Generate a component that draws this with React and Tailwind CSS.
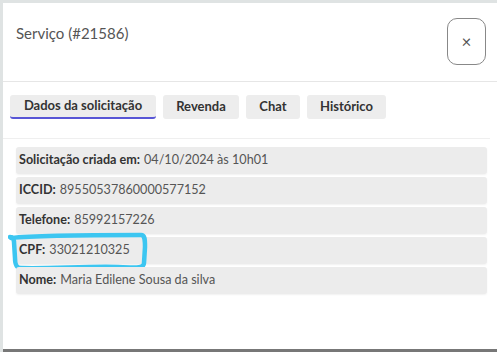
import React from "react";

const rows = [
  { label: "Solicitação criada em:", value: "04/10/2024 às 10h01" },
  { label: "ICCID:", value: "89550537860000577152" },
  { label: "Telefone:", value: "85992157226" },
  { label: "CPF:", value: "33021210325", marked: true },
  { label: "Nome:", value: "Maria Edilene Sousa da silva" },
];

const tabs = ["Dados da solicitação", "Revenda", "Chat", "Histórico"];

export default function App() {
  return (
    <div
      className="w-[497px] h-[352px] bg-[#dfe3e3] pl-[3px] pt-[3px] flex flex-col overflow-hidden"
      style={{ fontFamily: "Lato, 'Noto Sans', sans-serif" }}
    >
      <div className="flex-1 bg-white flex flex-col">
        {/* header */}
        <div className="h-[79px] border-b border-[#e6e6e6] flex items-start justify-between pl-[13px] pr-[11px]">
          <h1 className="mt-[19px] text-[15px] text-[#555]">Serviço (#21586)</h1>
          <button className="mt-[15px] w-[39px] h-[47px] border border-[#888] rounded-[10px] flex items-center justify-center text-[#555] text-[17px]">
            ×
          </button>
        </div>

        {/* tabs */}
        <div className="flex gap-[7px] pl-[7px] pt-[13px] pb-[19px] border-b border-[#efefef] mr-[7px]">
          {tabs.map((t, i) => (
            <button
              key={t}
              className={`h-[24px] px-[10px] rounded-[3px] bg-[#ededed] text-[13px] font-bold text-[#333] ${
                i === 0 ? "border-b-2 border-[#5856d6] w-[146px]" : ""
              } ${i === 1 ? "w-[76px]" : ""} ${i === 2 ? "w-[54px]" : ""} ${i === 3 ? "w-[79px]" : ""}`}
            >
              {t}
            </button>
          ))}
        </div>

        {/* details */}
        <div className="flex flex-col gap-[3px] pl-[13px] pr-[10px] pt-[8px]">
          {rows.map((r) => (
            <div
              key={r.label}
              className="relative h-[27px] bg-[#ececec] rounded-[3px] shadow-[0_1px_2px_rgba(0,0,0,0.06)] flex items-center px-[3px] text-[12.6px] text-[#555]"
            >
              <span className="font-bold text-[#333] mr-[4px]">{r.label}</span>
              {r.value}
              {r.marked && (
                <svg
                  className="absolute left-[-8px] top-[-6px]"
                  width="142"
                  height="42"
                  viewBox="0 0 142 42"
                  fill="none"
                >
                  <path
                    d="M3 7 C30 4 90 4 133 4 C137 4 137 9 137 16 L136 32 C136 37 131 37 110 36 C80 35 40 38 13 37 C8 37 7 33 7 27 L6 11 C6 8 5 6 2 6"
                    stroke="#3cc6f1"
                    strokeWidth="4.5"
                    strokeLinecap="round"
                    strokeLinejoin="round"
                  />
                </svg>
              )}
            </div>
          ))}
        </div>
      </div>
      <div className="h-[3px] bg-[#777] shrink-0" />
    </div>
  );
}
